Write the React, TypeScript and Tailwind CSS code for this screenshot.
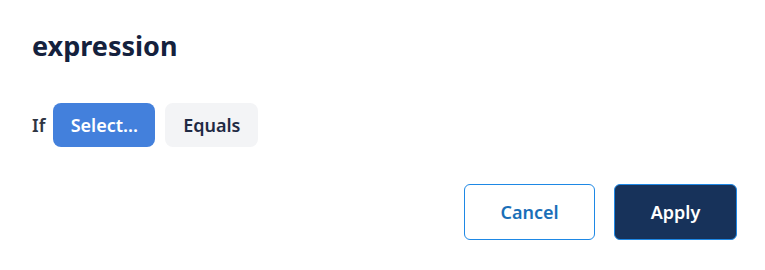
import React from 'react';

export default function App() {
  return (
    <div className="w-[765px] h-[270px] bg-white pl-8 pr-7 pt-[28px] font-['Noto_Sans',sans-serif]">
      <h2 className="text-[27px] leading-9 font-bold text-[#14213d]">expression</h2>
      <div className="mt-[39px] flex items-center">
        <span className="mr-2 text-lg font-semibold text-[#2f3542]">If</span>
        <button className="h-11 w-[102px] rounded-lg bg-[#4380dc] text-lg font-semibold text-white">Select...</button>
        <button className="ml-[10px] h-11 w-[93px] rounded-lg bg-[#f3f4f6] text-lg font-semibold text-[#1f2a44]">Equals</button>
      </div>
      <div className="mt-[37px] flex justify-end gap-[19px]">
        <button className="h-14 w-[131px] rounded-md border border-[#1e88e5] bg-white text-lg font-semibold text-[#1a6fb8]">Cancel</button>
        <button className="h-14 w-[123px] rounded-md border border-[#1e88e5] bg-[#17325a] text-lg font-semibold text-white">Apply</button>
      </div>
    </div>
  );
}
